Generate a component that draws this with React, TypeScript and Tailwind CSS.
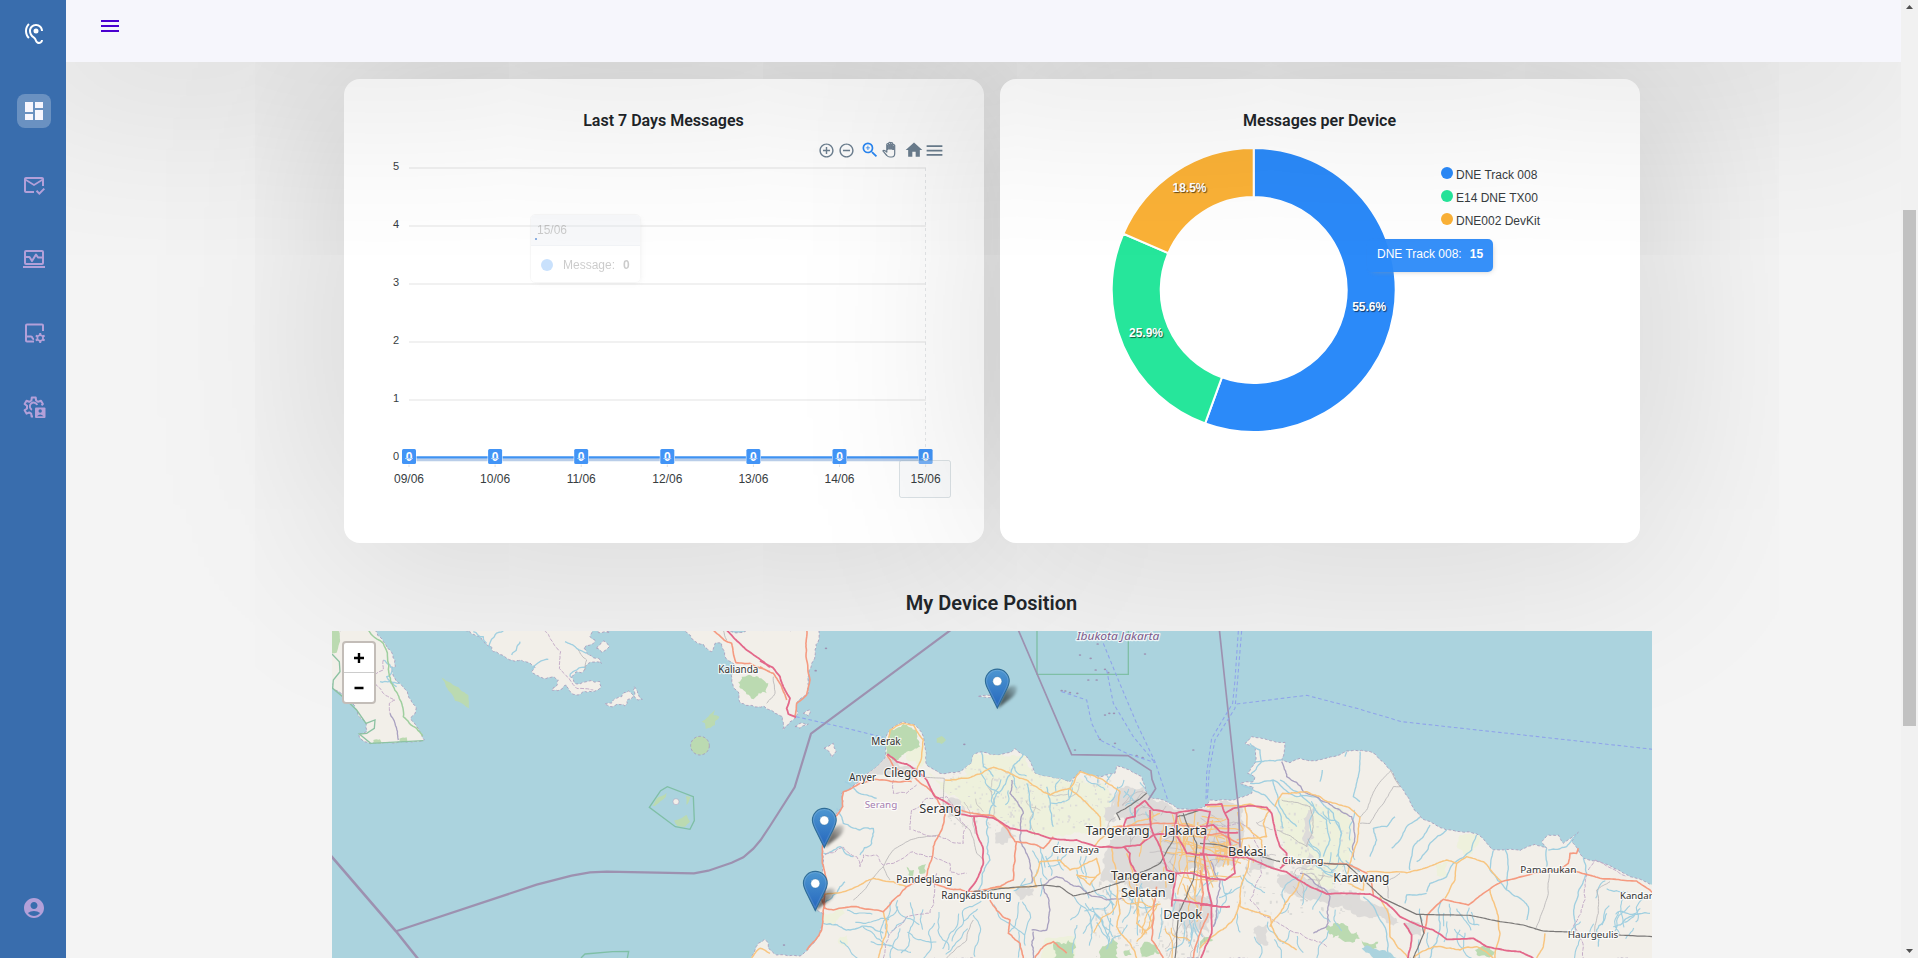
import React from 'react';
import {
  MdHearing,
  MdDashboard,
  MdOutlineMarkEmailRead,
  MdAccountCircle,
  MdMenu,
  MdAddCircleOutline,
  MdRemoveCircleOutline,
  MdZoomIn,
  MdHome,
} from 'react-icons/md';

/* ---------- geometry helpers ---------- */

type Pt = [number, number];

function rng(seed: number) {
  let s = seed >>> 0;
  return () => {
    s = (s * 1664525 + 1013904223) >>> 0;
    return s / 4294967296;
  };
}

function parse(src: string, dx = 0): Pt[] {
  return src.trim().split(/\s+/).map((p) => {
    const [x, y] = p.split(',').map(Number);
    return [x + dx, y] as Pt;
  });
}

// Midpoint displacement gives coasts and rivers their natural wobble.
function rough(pts: Pt[], amp: number, close = false): string {
  const r = rng(Math.round(pts[0][0] * 31 + pts[0][1] * 17 + pts.length * 7 + 5000));
  const out: Pt[] = [pts[0]];
  const split = (a: Pt, b: Pt) => {
    const len = Math.hypot(b[0] - a[0], b[1] - a[1]);
    if (len < 9) {
      out.push(b);
      return;
    }
    const k = ((r() - 0.5) * 2 * amp * Math.min(len, 60)) / len;
    const m: Pt = [(a[0] + b[0]) / 2 - (b[1] - a[1]) * k, (a[1] + b[1]) / 2 + (b[0] - a[0]) * k];
    split(a, m);
    split(m, b);
  };
  const src = close ? [...pts, pts[0]] : pts;
  for (let i = 1; i < src.length; i++) split(src[i - 1], src[i]);
  return 'M' + out.map((p) => p[0].toFixed(1) + ' ' + p[1].toFixed(1)).join('L') + (close ? 'Z' : '');
}

const B = 1320;
const C = 2640;

const land: string[] = [
  rough(parse('30,145 160,145 190,185 218,225 226,260 212,262 240,310 262,335 288,380 285,400 272,415 290,440 305,460 313,480 240,485 152,491 118,472 118,460 140,455 138,430 110,390 70,350 38,325 30,300'), 0.12, true),
  rough(parse('425,145 495,190 520,215 570,240 610,245 645,262 635,275 670,295 700,290 715,300 695,330 740,315 770,345 815,335 843,320 840,305 800,305 765,310 750,290 790,275 795,260 845,250 835,235 805,225 790,205 825,180 810,170 815,145'), 0.2, true),
  rough(parse('830,205 850,183 868,200 845,217'), 0.2, true),
  rough(parse('833,145 870,157 835,158'), 0.1, true),
  rough(parse('855,372 890,355 905,350 925,333 940,350 915,378'), 0.2, true),
  rough(parse('943,320 967,358 955,360 940,330'), 0.2, true),
  rough(
    [
      ...parse('1070,145 1120,180 1175,215 1185,190 1205,190 1218,235 1245,255 1240,320 1262,370 1330,378 1350,390'),
      ...parse('45,400 68,410 70,450 100,420 115,400 110,370 145,340 155,250 165,210 172,145', B),
    ],
    0.14,
    true,
  ),
  rough(parse('105,440 130,430 145,432 120,445', B), 0.2, true),
  rough(parse('130,400 150,390 145,408', B), 0.2, true),
  rough(parse('192,505 220,490 228,515 215,532 208,515', B), 0.08, true),
  rough(parse('655,349 690,346 692,353', B), 0.06, true),
];

const java = rough(
  [
    ...parse(
      '-30,1140 -15,1110 -5,1090 15,1078 25,1090 25,1105 50,1125 120,1128 150,1100 175,1070 188,1030 188,1000 165,985 190,950 200,910 188,880 187,800 195,770 230,700 248,680 245,640 290,610 330,575 375,535 378,500 380,465 400,440 430,425 465,435 490,470 498,520 500,555 540,580 600,575 635,550 640,525 665,515 720,525 755,515 765,505 800,530 825,580 880,595 930,605 960,572 1020,590 1065,580 1070,557 1110,570 1145,590 1160,640 1175,655 1220,665 1250,685 1300,690 1335,680',
      B,
    ),
    ...parse(
      '30,660 100,660 155,640 160,620 120,610 160,605 165,590 143,580 168,545 165,500 135,490 155,470 205,480 255,487 245,540 270,548 300,535 330,543 400,530 440,513 485,511 525,522 575,573 600,618 630,665 665,715 740,750 830,762 880,810 960,812 1005,793 1040,805 1025,785 1045,765 1075,765 1090,790 1135,757 1115,785 1150,835 1210,850 1290,890 1375,918 1375,1140',
      C,
    ),
  ],
  0.07,
  true,
);

const area = (src: string, dx: number, amp = 0.2) => rough(parse(src, dx), amp, true);
const farmland = [
  area('500,580 560,600 620,585 640,520 720,520 800,528 825,580 930,610 960,595 1030,610 1060,650 1040,740 930,765 850,770 760,740 700,710 640,690 560,640', B),
  area('250,650 320,655 400,680 445,700 460,790 440,850 390,930 330,900 300,850 250,800 220,720 230,660', C),
  area('190,1000 240,985 255,1000 215,1035 190,1030', B),
  area('855,1075 945,1070 945,1140 840,1140', B, 0.1),
  area('430,480 490,500 485,560 440,540', B),
  area('705,850 745,845 740,895 705,890', C),
  area('780,765 840,765 800,830 770,800', C),
  area('240,1070 260,1065 258,1100 235,1090', B),
];
const forest = [
  area('390,450 430,432 470,450 480,500 440,515 415,540 385,530 382,480', B),
  area('1265,290 1310,288 1345,310 1340,340 1300,358 1260,325', 0, 0.25),
  area('365,293 385,305 415,322 445,345 448,385 405,362 378,320', 0, 0.08),
  area('1145,425 1165,410 1185,390 1180,405 1198,410 1185,425 1185,435 1157,447 1155,430', 0, 0.12),
  area('997,678 1010,655 1040,638 1038,650 1005,678', 0, 0.08),
  area('1098,648 1112,650 1100,675', 0, 0.1),
  area('1062,722 1085,715 1100,705 1110,725 1095,740 1072,738', 0, 0.08),
  area('30,150 55,150 58,190 50,218 36,220 30,210', 0, 0.1),
  area('530,475 545,468 558,480 545,492 530,488', B, 0.15),
  area('160,480 180,478 185,488 160,490', 0, 0.1),
  area('238,476 260,472 262,484 238,486', 0, 0.1),
  area('880,1090 925,1080 940,1134 880,1134', B, 0.3),
  area('1020,1110 1055,1075 1070,1115 1075,1134 1020,1134', B, 0.3),
  area('1140,1105 1190,1095 1200,1120 1145,1130', B, 0.3),
  area('1090,1115 1110,1108 1115,1125 1095,1128', B, 0.2),
  area('440,860 462,870 460,895 445,885', B, 0.25),
  area('475,860 498,852 495,880 480,882', B, 0.25),
  area('385,1035 430,1030 450,1055 480,1075 465,1085 415,1065 385,1060', C, 0.35),
  area('485,1080 535,1085 530,1105 490,1095', C, 0.3),
  area('825,1110 870,1103 885,1115 860,1130 830,1125', C, 0.25),
  area('0,1085 30,1070 40,1080 0,1105', C, 0.2),
];
const urban = [
  area('1070,640 1150,620 1180,660 1250,690 1345,690 1345,870 1250,880 1240,960 1190,940 1020,900 1050,780 1110,740 1060,700', B, 0.25),
  area('0,680 100,670 130,690 120,780 100,860 20,870 0,880', C, 0.25),
  area('235,880 300,885 370,930 480,945 540,980 600,1030 560,1030 500,1010 400,985 290,950 240,920', C, 0.25),
  area('150,830 210,830 220,870 150,880', C, 0.3),
  area('610,1030 660,1030 665,1070 640,1065', C, 0.2),
  area('170,1040 205,1030 205,1095 170,1080', C, 0.3),
  area('320,582 360,545 378,530 420,560 480,570 470,590 400,595', B, 0.15),
  area('550,670 600,660 620,700 570,710', B, 0.3),
  area('705,760 740,735 770,770 730,795 705,790', B, 0.3),
  area('765,930 820,925 825,950 780,960', B, 0.3),
  area('1030,680 1065,665 1070,720 1030,710', B, 0.3),
  area('1240,960 1345,960 1345,1060 1260,1060', B, 0.3),
  area('325,690 350,685 345,860 300,870 320,800', C, 0.3),
  area('1250,250 1275,245 1270,265', 0, 0.2),
];

const motorway = [
  rough(parse('1220,150 1280,210 1350,262', 0), 0.03),
  rough(parse('0,242 38,262 60,290 75,330 90,355 80,385 85,402 108,412', B), 0.04),
  rough(parse('382,522 410,545 440,552 470,572 500,600 525,650 560,668 600,702 700,714 750,745 800,752 870,775 950,780 1010,800 1080,803 1140,795 1180,765 1260,760', B), 0.04),
  rough(parse('625,935 655,890 670,850 668,800 650,760 642,710', B), 0.06),
  rough(parse('1090,800 1110,820 1110,845 1130,880 1150,895', B), 0.06),
  rough(parse('1090,745 1100,715 1125,710 1125,685 1155,662 1180,690 1245,700 1320,690', B), 0.04),
  rough(parse('1170,690 1172,740 1200,800 1220,870 1250,880', B), 0.04),
  rough(parse('1250,700 1245,760 1280,820 1345,825', B), 0.04),
  rough(parse('1235,980 1240,930 1250,880 1300,880 1350,895', B), 0.04),
  rough(parse('1240,960 1300,968 1380,980', B), 0.04),
  rough(parse('0,690 30,695 20,740 10,820 20,900 35,970 35,1060 0,1140', C), 0.03),
  rough(parse('0,975 50,978 90,980', C), 0.06),
  rough(parse('15,675 65,672 75,700 85,720 85,770 100,830 105,880 75,900 20,895', C), 0.03),
  rough(parse('75,700 100,685 145,677 200,682 215,700 225,750 240,800 260,820 258,850 240,865', C), 0.03),
  rough(parse('0,820 30,825 80,830 140,832 200,858 260,876 330,920 380,942 430,940 510,942 560,970 600,1010 660,1038 700,1050 740,1078 820,1075 860,1100 920,1112 960,1115 1000,1134', C), 0.03),
  rough(parse('612,1030 635,1065 632,1100 622,1140', C), 0.04),
  rough(parse('0,740 40,735 60,755 115,758', C), 0.04),
];
const trunk = [
  rough(parse('1180,150 1212,180 1235,190 1248,248 1290,250 1350,275', 0), 0.05),
  rough(parse('140,150 138,230 150,300 140,345 110,370 105,410', B), 0.05),
  rough(parse('0,260 40,280 65,320 80,360', B), 0.05),
  rough(parse('380,525 400,560 455,585 500,620 530,655 555,700 545,750 520,800 500,890 440,920 395,965 370,995 290,980 220,990 195,985 185,955', B), 0.06),
  rough(parse('455,605 400,605 345,598 300,610 250,635 248,680 215,720 190,780 187,850 200,900 190,1000 185,1050 140,1110', B), 0.07),
  rough(parse('600,690 640,700 700,708 740,745 765,785 830,795 850,805 880,770', B), 0.05),
  rough(parse('770,785 760,900 720,920 640,935 560,925 500,900', B), 0.06),
  rough(parse('690,960 720,1000 750,1020 745,1060 780,1090 790,1134', B), 0.1),
  rough(parse('825,1134 850,1100 880,1085 920,1120', B), 0.1),
  rough(parse('1190,920 1180,1000 1175,1080 1210,1134', B), 0.06),
  rough(parse('1070,740 1130,735 1240,730 1320,745', B), 0.05),
  rough(parse('1300,1134 1320,1060 1345,1000', B), 0.06),
  rough(parse('0,870 10,940 0,1010', C), 0.06),
  rough(parse('0,765 60,760 118,790 122,810', C), 0.04),
  rough(parse('245,855 330,850 440,852 500,880 515,910 520,945', C), 0.03),
  rough(parse('672,1060 682,1005 730,958 805,975 850,940 905,905 1000,880 1075,870 1130,875 1200,895 1310,903 1350,930 1375,960', C), 0.03),
  rough(parse('1080,868 1105,850 1110,820 1130,820 1135,805', C), 0.04),
];
const secondary = [
  rough(parse('380,490 390,450 430,430 460,435 490,480 485,530 470,570', B), 0.06),
  rough(parse('555,600 620,595 665,580 700,562 760,585 800,600 870,645 930,625 960,575 1030,600 1080,635 1075,680', B), 0.07),
  rough(parse('930,625 990,680 1020,710 1020,750', B), 0.08),
  rough(parse('187,945 250,935 300,915 340,895 400,905 440,920', B), 0.06),
  rough(parse('370,995 380,1050 355,1134', B), 0.08),
  rough(parse('825,890 840,845 900,840 930,870 980,850 1010,835 1020,880 990,915 950,885 1010,890', B), 0.08),
  rough(parse('820,890 830,920 690,925', B), 0.06),
  rough(parse('1055,800 1070,880 1080,1000 1070,1040 1110,1090 1130,1134', B), 0.07),
  rough(parse('1100,820 1140,940 1130,1030 1160,1060', B), 0.07),
  rough(parse('1000,800 1030,770 1060,740 1100,740 1200,700', B), 0.08),
  rough(parse('20,680 150,672 210,690 190,730 200,770 110,780', C), 0.06),
  rough(parse('135,680 140,740 185,780 185,820', C), 0.06),
  rough(parse('225,680 248,640 320,635 360,650 440,680 480,712 470,790 450,850', C), 0.08),
  rough(parse('148,835 130,900 120,980 210,1010 230,1070 290,1110', C), 0.08),
  rough(parse('0,1105 50,1060 110,1000 120,960', C), 0.1),
  rough(parse('310,880 280,940 240,1000 210,1040', C), 0.08),
  rough(parse('500,875 620,878 700,855 740,840 770,850 800,830 850,845 905,905', C), 0.04),
  rough(parse('770,850 765,900 735,955', C), 0.05),
  rough(parse('870,930 895,1010 900,1060 885,1134', C), 0.06),
  rough(parse('540,950 565,1000 570,1070 625,1134', C), 0.06),
  rough(parse('640,1134 700,1100 780,1110 830,1100 880,1134', C), 0.08),
  rough(parse('1035,1060 1030,1100 1010,1134', C), 0.05),
  rough(parse('450,850 445,910 490,930 490,900', C), 0.08),
  rough(parse('-25,1134 0,1105 30,1120', B), 0.08),
];
const rail = [
  rough(parse('640,935 730,925 850,915 900,920 940,948 1010,930 1090,905 1200,850 1240,780 1250,710 1290,700 1320,690', B), 0.04),
  rough(parse('1270,700 1310,790 1300,900 1255,1000 1245,1134', B), 0.04),
  rough(parse('1080,720 1070,700 1120,670 1160,640', B), 0.03),
  rough(parse('0,790 60,795 150,820 240,845', C), 0.02),
  rough(parse('370,850 440,853 490,900 550,955 650,1003 810,1006 900,1025 970,1035 1030,1053 1115,1056', C), 0.01),
  rough(parse('1255,1065 1370,1070', C), 0.01),
  rough(parse('660,1005 672,1060 640,1134', C), 0.03),
];
const minor = [
  rough(parse('480,590 553,595 550,690', B), 0.02),
  rough(parse('570,700 630,750 650,820 670,840', B), 0.05),
  rough(parse('370,860 400,810 450,780 540,765', B), 0.05),
  rough(parse('280,960 370,860 390,900', B), 0.06),
  rough(parse('480,712 500,690 530,620 572,573 600,620 580,620 510,730 480,730', C), 0.05),
  rough(parse('245,660 330,680 340,740 320,800 230,750', C), 0.08),
  rough(parse('1005,1050 1045,940 1048,880', C), 0.04),
  rough(parse('1185,1060 1195,1000 1190,930 1230,905', C), 0.06),
  rough(parse('565,955 560,905 600,880', C), 0.05),
  rough(parse('1220,180 1210,150', 0), 0.05),
  rough(parse('775,210 800,240 795,270', 0), 0.08),
  rough(parse('40,290 45,340 20,370', B), 0.08),
  rough(parse('560,1134 620,1080 640,1020', B), 0.08),
];
const boundary = [
  rough(parse('755,600 750,640 790,700 780,780 810,850 815,910', B), 0.1),
  rough(parse('815,1050 860,1050 870,990 850,920 890,890 960,920 1010,950 1090,955', B), 0.12),
  rough(parse('820,1055 820,1134', B), 0.12),
  rough(parse('245,545 260,590 310,635 370,665 420,690 455,710 465,770 460,830', C), 0.12),
  rough(parse('30,840 60,900 50,1000 40,1040', C), 0.12),
  rough(parse('300,880 390,950 380,1040 340,1060', C), 0.12),
  rough(parse('210,400 225,430 235,480', 0), 0.08),
];
const dashedBoundary = [
  rough(parse('672,150 700,190 722,215 718,265 750,300 770,325 820,330', 0), 0.08),
  rough(parse('165,310 190,340 225,360 208,370 210,400', 0), 0.08),
  rough(parse('165,285 190,270 190,240', 0), 0.08),
  rough(parse('195,825 250,800 290,830 300,860 310,825 350,825 370,855 400,850 460,815 520,830 570,850 570,875 620,880', B), 0.12),
  rough(parse('450,750 455,690 500,655 560,650 620,740 610,790 540,770 460,750', B), 0.1),
  rough(parse('530,880 510,1000 440,1010 390,1060 370,1134', B), 0.1),
  rough(parse('400,600 400,640 440,640 470,615', B), 0.1),
  rough(parse('65,740 115,730 150,745 180,810 185,880 150,960 180,1000 300,1060 380,1100', C), 0.1),
  rough(parse('1160,880 1155,960 1120,1040 1150,1100 1150,1134', C), 0.1),
  rough(parse('1165,870 1185,840 1280,890', C), 0.05),
];
const rivers = [
  rough(parse('550,153 525,165 510,205', 0), 0.15),
  rough(parse('685,238 650,252 635,270', 0), 0.1),
  rough(parse('735,185 770,205 800,220', 0), 0.1),
  rough(parse('600,185 590,205 575,225', 0), 0.2),
  rough(parse('190,240 215,275 200,290 230,320', 0), 0.2),
  rough(parse('180,305 240,310', 0), 0.2),
  rough(parse('750,290 800,265', 0), 0.2),
  rough(parse('460,155 490,170 500,190', 0), 0.2),
  rough(parse('655,930 690,840 680,760 690,690 740,600 790,520', B), 0.12),
  rough(parse('665,515 670,560 700,590', B), 0.1),
  rough(parse('800,610 820,700 810,750', B), 0.1),
  rough(parse('860,620 870,680 880,740', B), 0.1),
  rough(parse('230,685 250,730 300,750 340,745 335,790 300,825', B), 0.15),
  rough(parse('255,605 290,635 350,655', B), 0.1),
  rough(parse('190,820 240,800 280,830', B), 0.15),
  rough(parse('190,970 230,940 255,905', B), 0.12),
  rough(parse('190,1030 270,1050 330,1040 370,1060', B), 0.12),
  rough(parse('150,490 180,510 185,545 150,590', C), 0.1),
  rough(parse('150,610 220,600 290,650 350,650 400,700 425,760 410,830', C), 0.08),
  rough(parse('240,600 300,640 380,720 390,780 370,830', C), 0.08),
  rough(parse('125,615 200,650 240,700 250,745', C), 0.1),
  rough(parse('220,600 240,680 290,740', C), 0.1),
  rough(parse('480,515 475,590 460,650 480,665', C), 0.04),
  rough(parse('440,515 435,530', C), 0.04),
  rough(parse('367,570 360,605', C), 0.04),
  rough(parse('585,710 560,740 520,745 530,780 510,830', C), 0.08),
  rough(parse('660,712 620,740 600,780 575,805', C), 0.08),
  rough(parse('690,735 640,800 630,870', C), 0.1),
  rough(parse('740,750 690,790 650,845', C), 0.1),
  rough(parse('830,765 815,810 760,850 740,890 690,910 680,935', C), 0.06),
  rough(parse('880,812 870,870 920,930', C), 0.06),
  rough(parse('915,805 925,860 920,930 985,980 980,1020', C), 0.08),
  rough(parse('1040,805 1040,860', C), 0.08),
  rough(parse('1130,760 1100,800 1045,810', C), 0.08),
  rough(parse('1150,835 1160,880 1130,960 1125,1060', C), 0.1),
  rough(parse('1220,1000 1190,1050 1195,1100', C), 0.1),
  rough(parse('1350,1000 1290,1010 1240,1040', C), 0.15),
  rough(parse('725,960 720,1040 690,1134', C), 0.12),
  rough(parse('490,950 530,1000 560,1060 560,1134', C), 0.08),
  rough(parse('680,940 620,945 615,970', C), 0.1),
  rough(parse('165,545 245,540', C), 0.1),
];

// Fine streams and street texture scattered over named regions.
function scatter(seed: number, n: number, box: [number, number, number, number], dx: number, len: number, heading: number, spread: number, wobble = 1.1): string {
  const r = rng(seed);
  const paths: string[] = [];
  for (let i = 0; i < n; i++) {
    let x = box[0] + r() * (box[2] - box[0]) + dx;
    let y = box[1] + r() * (box[3] - box[1]);
    let a = heading + (r() - 0.5) * spread;
    let d = `M${x.toFixed(0)} ${y.toFixed(0)}`;
    const steps = Math.round(len * (0.5 + r()));
    for (let k = 0; k < steps; k++) {
      a += (r() - 0.5) * wobble;
      a += (heading - a) * 0.08;
      x += Math.cos(a) * 8;
      y += Math.sin(a) * 8;
      d += `L${x.toFixed(0)} ${y.toFixed(0)}`;
    }
    paths.push(d);
  }
  return paths.join('');
}

const streams = [
  scatter(11, 18, [390, 960, 800, 1060], B, 14, 1.7, 1.4),
  scatter(12, 14, [780, 770, 1040, 900], B, 9, 1.6, 1),
  scatter(13, 12, [660, 530, 1060, 640], B, 9, 1.5, 0.8),
  scatter(14, 28, [940, 900, 1330, 1050], B, 12, 1.5, 0.8),
  scatter(15, 20, [0, 850, 450, 1080], C, 11, 1.6, 1),
  scatter(16, 14, [1130, 900, 1340, 1080], C, 8, 2.3, 0.8),
  scatter(17, 12, [640, 950, 820, 1080], C, 8, 1.6, 1),
  scatter(18, 14, [300, 660, 470, 860], C, 9, 1.3, 0.6),
  scatter(19, 6, [200, 990, 450, 1090], B, 12, 0.4, 0.8),
  scatter(20, 10, [1070, 590, 1160, 700], B, 6, 1.6, 0.8),
];
const greyTexture = [
  scatter(31, 26, [1040, 660, 1340, 860], B, 7, 0.8, 4),
  scatter(32, 18, [0, 700, 210, 880], C, 7, 0.8, 4),
  scatter(33, 9, [560, 570, 1050, 740], B, 9, 1.4, 2),
  scatter(34, 9, [240, 850, 400, 940], C, 6, 1, 4),
  scatter(35, 10, [1240, 960, 1340, 1110], B, 8, 1, 3),
];
const orangeTexture = [
  scatter(41, 20, [1170, 690, 1340, 860], B, 12, 1.57, 0.3, 0.5),
  scatter(42, 16, [1200, 720, 1340, 900], B, 11, 0.05, 0.2, 0.4),
  scatter(43, 14, [0, 700, 70, 850], C, 10, 0.05, 0.2, 0.4),
  scatter(44, 11, [0, 690, 150, 800], C, 10, 1.57, 0.3, 0.5),
  scatter(45, 12, [1050, 850, 1340, 1050], B, 13, 1.5, 0.5),
];

function speckles(seed: number, n: number, box: [number, number, number, number], dx: number, size: number) {
  const r = rng(seed);
  let d = '';
  for (let i = 0; i < n; i++) {
    const x = box[0] + dx + r() * (box[2] - box[0]);
    const y = box[1] + r() * (box[3] - box[1]);
    const w = 1.5 + r() * size;
    const h = 1.5 + r() * size;
    d += `M${x.toFixed(1)} ${y.toFixed(1)}h${w.toFixed(1)}v${h.toFixed(1)}h-${w.toFixed(1)}z`;
  }
  return d;
}
const greySpeckles = [
  speckles(51, 260, [560, 550, 1050, 750], B, 6),
  speckles(52, 90, [240, 670, 450, 900], C, 7),
  speckles(53, 170, [1000, 850, 1340, 1130], B, 9),
  speckles(54, 90, [100, 850, 480, 1000], C, 8),
].join('');

const isles: Pt[] = [
  [960, 225], [992, 235], [1013, 192], [1007, 270], [1035, 268], [1045, 278], [1155, 222], [985, 300], [1010, 300],
  [905, 332], [916, 333], [930, 338], [952, 340], [1035, 405], [1048, 400], [1062, 400], [1020, 478], [1065, 490], [945, 510],
  [1300, 510], [1148, 533], [613, 493], [198, 205], [167, 272], [72, 1095], [1130, 527],
];

interface Label {
  t: string;
  x: number;
  y: number;
  w: number;
  s: number;
  c?: string;
  i?: boolean;
}
const labels: Label[] = [
  { t: 'Kalianda', x: 1255, y: 278, w: 120, s: 30 },
  { t: 'Merak', x: 378 + B, y: 494, w: 88, s: 30 },
  { t: 'Anyer', x: 308 + B, y: 602, w: 80, s: 30 },
  { t: 'Cilegon', x: 434 + B, y: 590, w: 125, s: 38 },
  { t: 'Serang', x: 363 + B, y: 684, w: 98, s: 29, c: '#a67db0' },
  { t: 'Serang', x: 541 + B, y: 700, w: 126, s: 38 },
  { t: 'Pandeglang', x: 493 + B, y: 908, w: 168, s: 30 },
  { t: 'Rangkasbitung', x: 649 + B, y: 957, w: 210, s: 30 },
  { t: 'Citra Raya', x: 947 + B, y: 819, w: 140, s: 29 },
  { t: 'Tangerang', x: 1073 + B, y: 765, w: 192, s: 38 },
  { t: 'Jakarta', x: 1277 + B, y: 766, w: 128, s: 38 },
  { t: 'Tangerang', x: 1149 + B, y: 901, w: 192, s: 38 },
  { t: 'Selatan', x: 1150 + B, y: 951, w: 134, s: 38 },
  { t: 'Depok', x: 1268 + B, y: 1018, w: 116, s: 38 },
  { t: 'Bekasi', x: 142 + C, y: 828, w: 116, s: 38 },
  { t: 'Cikarang', x: 308 + C, y: 852, w: 124, s: 29 },
  { t: 'Karawang', x: 484 + C, y: 905, w: 168, s: 36 },
  { t: 'Pamanukan', x: 1045 + C, y: 879, w: 168, s: 29 },
  { t: 'Kandar', x: 1309 + C, y: 957, w: 98, s: 29 },
  { t: 'Haurgeulis', x: 1179 + C, y: 1074, w: 152, s: 29 },
  { t: 'Ibukota Jakarta', x: 1074 + B, y: 180, w: 248, s: 33, c: '#7d5a8a', i: true },
];

const Lines = ({ d, stroke, width, dash }: { d: string[]; stroke: string; width: number; dash?: string }) => (
  <path d={d.join('')} fill="none" stroke={stroke} strokeWidth={width} strokeDasharray={dash} strokeLinejoin="round" />
);

const Pin = ({ x, y }: { x: number; y: number }) => (
  <g transform={`translate(${x - 12.5} ${y - 40})`}>
    <path d="M12.5 40L20 22Q27 15 32 18Q33 25 26 30Z" fill="url(#pinShade)" filter="url(#pinBlur)" />
    <path
      d="M12.5 .6C5.8.6.6 5.8.6 12.4c0 3.2 1.6 6.3 3 9.2L12.5 39.6l8.9-18c1.4-2.9 3-6 3-9.2C24.4 5.8 19.2.6 12.5.6z"
      fill="url(#pinFill)"
      stroke="#2e6c97"
      strokeWidth="1.1"
    />
    <path d="M12.5 1.7C6.4 1.7 1.7 6.4 1.7 12.4c0 3 1.5 5.900 2.900 8.800L12.500 37l7.900-15.800c1.400-2.900 2.900-5.800 2.900-8.800C23.300 6.400 18.600 1.700 12.500 1.700z" fill="none" stroke="#fff" strokeOpacity=".13" strokeWidth="1.1" />
    <circle cx="12.500" cy="12.700" r="4.500" fill="#fff" stroke="#2e6c97" strokeOpacity=".6" strokeWidth=".6" />
  </g>
);

function DeviceMap() {
  return (
    <div className="relative h-[327px] w-[1320px] shrink-0 overflow-hidden bg-[#abd3de]">
      <svg className="block h-full w-full" viewBox="332 631 1320 327">
        <defs>
          <linearGradient id="pinFill" x1="0" y1="0" x2="0" y2="1">
            <stop offset="0" stopColor="#4d97d1" />
            <stop offset="1" stopColor="#2566bd" />
          </linearGradient>
          <linearGradient id="pinShade" x1="0" y1="1" x2="1" y2="0">
            <stop offset="0" stopColor="#000" stopOpacity="0.65" />
            <stop offset="0.5" stopColor="#000" stopOpacity="0.5" />
            <stop offset="1" stopColor="#000" stopOpacity="0.1" />
          </linearGradient>
          <filter id="pinBlur" x="-50%" y="-50%" width="200%" height="200%">
            <feGaussianBlur stdDeviation="1.8" />
          </filter>
          <clipPath id="javaClip">
            <path d={java} />
          </clipPath>
        </defs>
        <g transform="translate(320 580) scale(0.33333)">
          <path d={land.join('')} fill="#f2efe9" stroke="#a79abb" strokeWidth="2.500" strokeDasharray="8 6" />
          <path d={java} fill="#f2efe9" stroke="#a79abb" strokeWidth="2.500" strokeDasharray="8 6" />
          <g clipPath="url(#javaClip)">
            <path d={farmland.join('')} fill="#eef1dc" />
            <path d={urban.join('')} fill="#dddbd9" />
            <path d={greySpeckles} fill="#dcdbd8" />
          </g>
          <path d={forest.join('')} fill="#bbdab1" />
          <circle cx="1140" cy="497" r="28" fill="#bbdab1" stroke="#a79abb" strokeWidth="2.500" strokeDasharray="8 6" />
          <circle cx="1068" cy="665" r="9" fill="#f2efe9" stroke="#a79abb" strokeWidth="1.500" />
          {isles.map(([x, y]) => (
            <ellipse key={`${x}-${y}`} cx={x + B} cy={y} rx="3.800" ry="2.600" fill="#9d92b3" />
          ))}
          <g clipPath="url(#javaClip)">
            <Lines d={greyTexture} stroke="#bcb8bb" width={2} />
            <Lines d={streams} stroke="#a0cfe0" width={3.4} />
          </g>
          <Lines d={rivers} stroke="#a0cfe0" width={4} />
          <path d={area('485,1105 530,1108 590,1134 520,1134', C)} fill="#abd3de" />
          <Lines d={minor} stroke="#bab7b8" width={2.6} />
          <Lines d={dashedBoundary} stroke="#c4acc8" width={3} dash="12 4" />
          <Lines d={boundary} stroke="#a9a1c0" width={4} />
          <g clipPath="url(#javaClip)">
            <Lines d={orangeTexture} stroke="#f7c57f" width={3.6} />
          </g>
          <Lines d={secondary} stroke="#f8c580" width={4.4} />
          <Lines d={trunk} stroke="#f59a80" width={4.8} />
          <Lines d={rail} stroke="#7b7978" width={3.6} />
          <Lines d={motorway} stroke="#e3688a" width={5.4} />
          <path d={rough(parse('145,150 190,190 205,250 220,320 240,360 250,410 290,445 308,468'), 0.08)} fill="none" stroke="#9fcf9f" strokeWidth="4.500" />
          <path d="M36 222L58 245L60 275L40 300L38 325L70 352L110 390L138 430L165 420L163 445L140 460L118 462L152 490L310 482" fill="none" stroke="#8cc2a2" strokeWidth="4" />
          <g fill="none" stroke="#7fbfa6" strokeWidth="4">
            <path d="M988 682L1022 632L1042 620L1120 650L1123 722L1110 748L1066 740Z" />
            <path d="M783 1134L795 1122L878 1115L926 1114L922 1134" />
            <path d="M2151 145V283H2425V145" />
          </g>
          <g fill="none" stroke="#9d91b0">
            <path d="M30 824L228 1054L300 1144" strokeWidth="7.500" />
            <path d="M228 1054L650 914L755 887L810 877L860 875L1122 880L1165 872L1235 848L1270 832L1300 806L1322 780L1350 738L1424 622L1473 461L1895 148" strokeWidth="6.500" />
            <path d="M2094 148L2255 524L2424 527L2493 572L2496 598L2507 626L2485 660" strokeWidth="5" />
            <path d="M2698 148L2756 690L2760 800" strokeWidth="5" />
          </g>
          <g fill="none" stroke="#8fa3ea" strokeWidth="3.200" strokeDasharray="11 8">
            <path d="M1428 410L1560 440L1690 472" />
            <path d="M2350 190L2395 300L2450 430L2505 545L2545 665" />
            <path d="M2360 270L2380 370L2440 470L2505 548" />
            <path d="M2225 335L2300 360L2315 430L2340 480L2420 520L2505 548" />
            <path d="M2755 153L2745 300L2738 370L2675 475L2660 580L2658 660" />
            <path d="M2765 153L2752 310L2745 385L2685 480L2668 570L2662 655" />
            <path d="M2750 372L2960 346L3110 385L3245 425L4000 508" />
          </g>
          {labels.map((l) => (
            <text
              key={`${l.t}-${l.x}`}
              x={l.x}
              y={l.y}
              textAnchor="middle"
              textLength={l.w}
              lengthAdjust="spacingAndGlyphs"
              fontSize={l.s}
              fontStyle={l.i ? 'italic' : 'normal'}
              fill={l.c ?? '#333'}
              stroke="#fff"
              strokeOpacity="0.75"
              strokeWidth="7"
              strokeLinejoin="round"
              paintOrder="stroke"
              className="font-['Noto_Sans',sans-serif]"
            >
              {l.t}
            </text>
          ))}
        </g>
        <Pin x={997.3} y={708.5} />
        <Pin x={824.3} y={847.8} />
        <Pin x={815.3} y={910.8} />
      </svg>
      <div className="absolute left-[10px] top-[10px] flex w-[34px] flex-col overflow-hidden rounded border-2 border-[#c3bdb8] bg-white">
        <button className="flex h-[30px] items-center justify-center border-b border-[#ccc]">
          <svg width="12" height="12" viewBox="0 0 12 12"><path d="M1 6H11M6 1V11" stroke="#000" strokeWidth="2.400" /></svg>
        </button>
        <button className="flex h-[29px] items-center justify-center">
          <svg width="12" height="12" viewBox="0 0 12 12"><path d="M1.500 6H10.500" stroke="#000" strokeWidth="2.400" /></svg>
        </button>
      </div>
    </div>
  );
}

/* ---------- sidebar ---------- */

const LaptopPulse = () => (
  <svg width="24" height="24" viewBox="0 0 24 24" fill="none" stroke="currentColor" strokeWidth="2">
    <rect x="3" y="4" width="18" height="13" rx="1" />
    <path d="M1 20H23" />
    <path d="M3 10H7.500L10 14L14 7.500L16 10.500H21" strokeLinejoin="round" />
  </svg>
);

const gearPath = (cx: number, cy: number, ro: number, ri: number, n: number) => {
  const pts: string[] = [];
  const w = Math.PI / n;
  const add = (ang: number, rad: number) => pts.push(`${(cx + Math.sin(ang) * rad).toFixed(2)} ${(cy - Math.cos(ang) * rad).toFixed(2)}`);
  for (let i = 0; i < n; i++) {
    const a = (i * 2 * Math.PI) / n;
    add(a - w * 0.62, ri);
    add(a - w * 0.34, ro);
    add(a + w * 0.34, ro);
    add(a + w * 0.62, ri);
  }
  return 'M' + pts.join('L') + 'Z';
};

const PanelGear = () => (
  <svg width="24" height="24" viewBox="0 0 24 24" fill="none" stroke="currentColor" strokeWidth="2">
    <path d="M21 10V4.500a1 1 0 0 0-1-1H5a1 1 0 0 0-1 1v15a1 1 0 0 0 1 1h7" />
    <path d="M4 15.500H9Q10 15.500 10.300 16.800T12 18" />
    <path
      d={gearPath(18.2, 17, 5.2, 3.7, 6) + 'M20.200 17a2 2 0 1 0-4 0a2 2 0 1 0 4 0z'}
      fill="currentColor"
      fillRule="evenodd"
      stroke="none"
    />
  </svg>
);

const GearBadge = () => (
  <svg width="24" height="24" viewBox="0 0 24 24" fill="none" stroke="currentColor" strokeWidth="2">
    <path d="M11 21.500H9.600L9.200 18.600L7.200 17.500L4.500 18.600L2.600 15.300L5 13.500V10.800L2.600 9L4.500 5.700L7.200 6.800L9.400 5.500L9.800 2.500H13.700L14.100 5.500L16.200 6.800L19 5.700L20.900 9L19.500 10.200" strokeLinejoin="round" />
    <path d="M15.200 10A3.800 3.800 0 1 0 10 14.800" />
    <rect x="13" y="12.500" width="10.500" height="10.500" rx="1" fill="currentColor" stroke="none" />
    <circle cx="18.200" cy="16" r="1.700" fill="#396dad" stroke="none" />
    <path d="M15 21.300Q18.200 17.700 21.500 21.300Z" fill="#396dad" stroke="none" />
  </svg>
);

function Sidebar() {
  return (
    <aside className="relative z-20 flex h-full w-[66px] shrink-0 flex-col items-center bg-[#396dad] pl-[2px] pt-[22px] text-[#b3a0d9]">
      <MdHearing className="size-6 text-white" />
      <span className="mt-12 flex size-[34px] items-center justify-center rounded-lg bg-white/25 text-[#f6f5fd]">
        <MdDashboard className="size-6" />
      </span>
      <nav className="mt-[45px] flex flex-col items-center gap-[50px]">
        <MdOutlineMarkEmailRead className="size-6" />
        <LaptopPulse />
        <PanelGear />
        <GearBadge />
      </nav>
      <MdAccountCircle className="mb-[38px] mt-auto size-6" />
    </aside>
  );
}

/* ---------- cards ---------- */

const Card = ({ title, children }: { title: string; children: React.ReactNode }) => (
  <section className="relative h-[464px] w-[640px] shrink-0 rounded-2xl bg-white shadow-[0_0_200px_rgba(0,0,0,0.17)]">
    <h2 className="h-[53px] pr-px pt-[30px] text-center text-[16px] font-semibold leading-6 text-[#212529]">{title}</h2>
    {children}
  </section>
);

const days = ['09/06', '10/06', '11/06', '12/06', '13/06', '14/06', '15/06'];

function LineChart() {
  return (
    <Card title="Last 7 Days Messages">
      <svg className="block font-['Liberation_Sans',sans-serif]" width="640" height="411" viewBox="344 132 640 411">
        {[5, 4, 3, 2, 1, 0].map((v, i) => (
          <g key={v}>
            {v > 0 && <path d={`M409 ${168 + i * 58}H926`} stroke="#e3e3e3" />}
            <text x="399" y={170 + i * 58} fontSize="11" textAnchor="end" fill="#373d3f">{v}</text>
          </g>
        ))}
        <path d="M925.500 168V458" stroke="#e6e8ea" strokeDasharray="3 3" />
        <path d="M409 459.800H926" stroke="#b9cde8" strokeWidth="3" />
        <path d="M409 457.300H926" stroke="#3e92f2" strokeWidth="2.200" />
        {days.map((d, i) => {
          const x = 409 + i * 86.1;
          return (
            <g key={d} textAnchor="middle">
              <path d={`M${x} 463V467`} stroke="#e0e0e0" />
              <rect x={x - 7.5} y="448.500" width="15" height="16" rx="1.500" fill="#fff" />
              <rect x={x - 7} y="449" width="14" height="15" rx="1.500" fill="#4294f6" />
              <text x={x} y="460.500" fontSize="12" fontWeight="bold" fill="#fff">0</text>
              <path d={`M${x - 4} 458.500H${x + 4}`} stroke="#a9cdf8" strokeWidth="1" />
            </g>
          );
        })}
        <rect x="899.500" y="460.500" width="51" height="37" rx="2" fill="#f0f3f6" fillOpacity="0.300" stroke="#90a4ae" strokeOpacity="0.300" />
        {days.map((d, i) => (
          <text key={d} x={409 + i * 86.1} y="483" fontSize="12" textAnchor="middle" fill="#373d3f">{d}</text>
        ))}
      </svg>
      <div className="absolute left-[473.500px] top-[62px] flex h-[18px] items-center text-[#6e8192]">
        <MdAddCircleOutline className="size-[17px]" />
        <MdRemoveCircleOutline className="ml-[3px] size-[17px]" />
        <MdZoomIn className="ml-[5px] size-5 text-[#2b8af7]" />
        <svg className="ml-[2px]" width="16" height="18" viewBox="0 0 16 18" fill="none" stroke="currentColor" strokeWidth="1.200" strokeLinejoin="round">
          <path d="M4.800 11V3.300Q5.700 1.800 6.700 3.300V8V2Q7.700.6 8.700 2V8V2.300Q9.700 1 10.700 2.300V8.500V4.300Q11.700 3 12.700 4.300V12.500Q12.700 16 9.800 16H8Q6 16 4.800 14.500L.9 9.900Q2 8.500 4.800 11Z" />
          <path d="M5.500 4V9M7.700 3V8.500M9.700 3V8.500M11.700 5V9" strokeWidth="1.300" />
        </svg>
        <MdHome className="ml-[6px] size-[20px]" />
        <MdMenu className="size-[21px]" />
      </div>
      <div className="absolute left-[186px] top-[135px] h-[69px] w-[111px] overflow-hidden rounded-[5px] border border-[#e3e3e3] bg-white/90 font-['Liberation_Sans',sans-serif] text-[12px] text-[#333] opacity-25 shadow-[2px_2px_6px_-4px_#999]">
        <div className="h-[31px] border-b border-[#ccd6e0] bg-[#e4ebf2] pl-[6px] pt-[7px] leading-4">15/06</div>
        <div className="flex h-[37px] items-center pl-[10px]">
          <span className="size-3 rounded-full bg-[#2b8af7]" />
          <span className="ml-[10px]">Message:</span>
          <b className="ml-2">0</b>
        </div>
      </div>
      <span className="absolute left-[191px] top-[159px] size-[2px] bg-[#8fb2e4]" />
    </Card>
  );
}

const slices = [
  { name: 'DNE Track 008', value: 15, color: '#2b8af9', dot: 'bg-[#2b8af9]', pct: '55.6%', x: 1369.2, y: 311 },
  { name: 'E14 DNE TX00', value: 7, color: '#26e69b', dot: 'bg-[#26e69b]', pct: '25.9%', x: 1146, y: 337 },
  { name: 'DNE002 DevKit', value: 5, color: '#fbb237', dot: 'bg-[#fbb237]', pct: '18.5%', x: 1189.5, y: 192 },
];

const arc = (from: number, to: number) => {
  const cx = 1253.7;
  const cy = 290;
  const p = (f: number, r: number) => `${(cx + Math.sin(f * 2 * Math.PI) * r).toFixed(2)} ${(cy - Math.cos(f * 2 * Math.PI) * r).toFixed(2)}`;
  const big = to - from > 0.5 ? 1 : 0;
  return `M${p(from, 142)}A142 142 0 ${big} 1 ${p(to, 142)}L${p(to, 93)}A93 93 0 ${big} 0 ${p(from, 93)}Z`;
};

function DonutChart() {
  let start = 0;
  return (
    <Card title="Messages per Device">
      <div className="flex font-['Liberation_Sans',sans-serif] text-[12px] text-[#373d3f]">
        <svg className="block" width="441" height="411" viewBox="1000 132 441 411">
          {slices.map((s) => {
            const from = start;
            start += s.value / 27;
            return <path key={s.name} d={arc(from, start)} fill={s.color} stroke="#fff" strokeWidth="2" />;
          })}
          {slices.map((s) => (
            <text key={s.pct} x={s.x} y={s.y} textAnchor="middle" fontSize="12" fontWeight="bold" fill="#fff" className="[text-shadow:1px_1px_1px_rgba(0,0,0,0.6)]">
              {s.pct}
            </text>
          ))}
        </svg>
        <ul className="flex flex-col pt-[31px]">
          {slices.map((s) => (
            <li key={s.name} className="flex h-[23px] items-center gap-[3px]">
              <span className={`mb-1 size-3 rounded-full ${s.dot}`} />
              {s.name}
            </li>
          ))}
        </ul>
      </div>
      <div className="absolute left-[367px] top-[160px] flex h-[33px] w-[126px] rounded-[5px] bg-[#2b8af9]/95 pl-[10px] pt-[6px] font-['Liberation_Sans',sans-serif] text-[12px] leading-[18px] text-white shadow-[2px_2px_6px_-4px_#999]">
        DNE Track 008:<b className="ml-2">15</b>
      </div>
    </Card>
  );
}

export default function App() {
  return (
    <div className="flex h-[958px] w-[1918px] overflow-hidden bg-[#f4f4f4] font-['Roboto',sans-serif]">
      <Sidebar />
      <div className="flex h-full w-[1835px] shrink-0 flex-col">
        <header className="relative z-10 -ml-[66px] flex h-[62px] shrink-0 items-center bg-[#f6f6fc] pb-[10px] pl-[98px] text-[#4a00d0] shadow-[0_0_200px_rgba(0,0,0,0.25)]">
          <MdMenu className="size-6" />
        </header>
        <main className="flex w-[1852px] flex-1 flex-col items-center pt-[17px]">
          <div className="flex gap-4">
            <LineChart />
            <DonutChart />
          </div>
          <h1 className="relative mb-[13px] mt-[45px] pr-px text-[20px] font-semibold leading-[30px] text-[#212529]">My Device Position</h1>
          <div className="relative">
            <DeviceMap />
          </div>
        </main>
      </div>
      <div className="relative z-20 flex h-full w-[17px] shrink-0 flex-col items-center bg-[#f1f1f1]">
        <svg width="17" height="17" viewBox="0 0 17 17"><path d="M5 9L8.500 5L12 9Z" fill="#505050" /></svg>
        <div className="mt-[193px] h-[516px] w-[13px] bg-[#c1c1c1]" />
        <svg className="mt-auto" width="17" height="17" viewBox="0 0 17 17"><path d="M5 8L8.500 12L12 8Z" fill="#505050" /></svg>
      </div>
    </div>
  );
}
